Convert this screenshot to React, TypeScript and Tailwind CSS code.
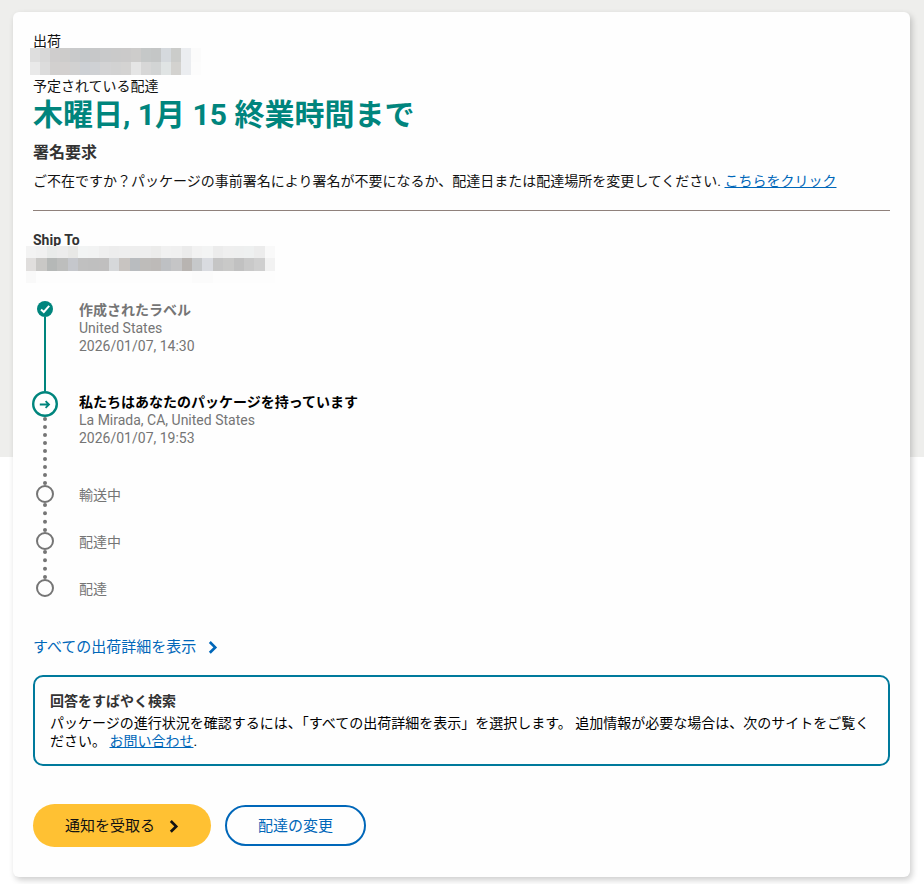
import React from 'react';

const TRACKING_MASK = [
  ['#dedede', '#d8d8d8', '#cfcdcd', '#cdcccb', '#c9cacb', '#c5c8ca', '#c7c8c9', '#c9cacb', '#cacaca', '#cbcaca', '#cdcccb', '#c5c8c8', '#c4c6c6', '#d5d9dd', '#cbccca', '#ebedf0', '#fbfbfb'],
  ['#e9e9e9', '#dcdcdc', '#d2d0cf', '#d3d0cf', '#d1d1d1', '#cdd0d4', '#cfd1d4', '#d3d3d4', '#d2d2d2', '#d4d3d2', '#e5e5e5', '#d7d7d7', '#d2d4d4', '#e0e4e4', '#d3d2cf', '#ebedf0', '#fcfcfc'],
];

const ADDRESS_MASK = [
  ['#f3f3f3', '#f1f1f1', '#e9ebea', '#ececec', '#e8e8e6', '#f2f4f4', '#f2f3f3', '#efefef', '#ededed', '#eeeeee', '#eeeeee', '#eeeeee', '#ececeb', '#f1f1f1', '#f0f0f0', '#ebebeb', '#f2f2f2', '#f3f4f4', '#ececec', '#efefef', '#eeefef', '#eef0f0', '#ececec', '#f9f9f9'],
  ['#e0dedd', '#c9c8c6', '#b5b8b7', '#bdbebd', '#c5c7cc', '#c0c0c0', '#bfbfbf', '#c0bfbf', '#d6d8da', '#c8c4c1', '#b9bcbf', '#bebcba', '#bdbab8', '#bec0c3', '#c5c5c6', '#b8b4b1', '#c6c8ca', '#d9dbe0', '#c5c5c5', '#c9c9c8', '#c1c1c1', '#c9c9c9', '#cfcfcf', '#f2f2f2'],
  ['#f9f9f9', '#fdfdfd', '#fdfdfd', '#fdfdfd', '#fdfdfd', '#fdfdfd', '#fdfdfd', '#fdfdfd', '#fdfdfd', '#fdfdfd', '#fdfdfd', '#fdfdfd', '#fdfdfd', '#fdfdfd', '#fdfdfd', '#fdfdfd', '#fbfbfb', '#fbfbfb', '#fdfdfd', '#fdfdfd', '#fdfdfd', '#fdfdfd', '#fdfdfd', '#fdfdfd'],
];

type Status = 'done' | 'current' | 'pending';

const STEPS: { title: string; status: Status; details: string[] }[] = [
  { title: '作成されたラベル', status: 'done', details: ['United States', '2026/01/07, 14:30'] },
  { title: '私たちはあなたのパッケージを持っています', status: 'current', details: ['La Mirada, CA, United States', '2026/01/07, 19:53'] },
  { title: '輸送中', status: 'pending', details: [] },
  { title: '配達中', status: 'pending', details: [] },
  { title: '配達', status: 'pending', details: [] },
];

// Private data is shown as a mosaic
function Mosaic({ rows }: { rows: string[][] }) {
  return (
    <div className="flex h-full flex-col" aria-hidden="true">
      {rows.map((row, i) => (
        <div key={i} className="flex flex-1">
          {row.map((color, j) => (
            <span key={j} className="flex-1" style={{ backgroundColor: color }} />
          ))}
        </div>
      ))}
    </div>
  );
}

function Marker({ status }: { status: Status }) {
  if (status === 'done') {
    return (
      <svg className="size-4 shrink-0" viewBox="0 0 16 16" fill="none">
        <circle cx="8" cy="8" r="8" fill="#00857d" />
        <path d="M4 8.4 6.8 11 12.2 4.8" stroke="#fff" strokeWidth="2" />
      </svg>
    );
  }
  if (status === 'current') {
    return (
      <svg className="size-[26px] shrink-0" viewBox="0 0 26 26" fill="none">
        <circle cx="13" cy="13" r="11.8" fill="#fff" stroke="#00857d" strokeWidth="2.4" />
        <path d="M7.8 13.5H17M13.6 10.1 17 13.5 13.6 16.9" stroke="#00857d" strokeWidth="1.8" />
      </svg>
    );
  }
  return <span className="size-[18px] shrink-0 rounded-full border-2 border-[#757575]" />;
}

function Chevron() {
  return (
    <svg className="h-3.5 w-2.5" viewBox="0 0 10 14" fill="none">
      <path d="M1.8 2 7.2 7.4 1.8 12.8" stroke="currentColor" strokeWidth="2.7" />
    </svg>
  );
}

export default function App() {
  return (
    <div className="min-h-screen bg-[linear-gradient(#eeeeec_457px,#fff_457px)] px-[13px] pt-3 pb-[7px] font-['Roboto','Noto_Sans_CJK_JP',sans-serif] text-sm leading-[18px] text-[#121212]" lang="ja">
      <main className="mr-px rounded-md bg-[#fefefe] px-5 pt-5 pb-[30px] shadow-[2px_3px_6px_rgba(0,0,0,0.2)]">
        {/* Shipment summary */}
        <section>
          <p>出荷</p>
          <div className="-mt-0.5 -ml-[3px] h-[27px] w-[171px]">
            <Mosaic rows={TRACKING_MASK} />
          </div>
          <p className="mt-0.5">予定されている配達</p>
          <h1 className="text-[30px] leading-10 font-bold text-[#00857d]">木曜日, 1月 15 終業時間まで</h1>
          <h2 className="mt-2 text-base leading-5 font-bold text-[#333]">署名要求</h2>
          <p className="mt-[9px]">
            ご不在ですか？パッケージの事前署名により署名が不要になるか、配達日または配達場所を変更してください.{' '}
            <a href="#change" className="text-[#0067b9] underline">こちらをクリック</a>
          </p>
        </section>

        <hr className="mt-5 border-[#8f817b]" />

        {/* Recipient */}
        <section className="mt-5">
          <h3 className="font-bold text-[#333]">Ship To</h3>
          <div className="relative -mt-[3px] -ml-[7px] h-[37px] w-[249px]">
            <Mosaic rows={ADDRESS_MASK} />
          </div>
        </section>

        {/* Progress */}
        <ol className="mt-[18px]">
          {STEPS.map((step, i) => {
            const last = i === STEPS.length - 1;
            return (
              <li
                key={step.title}
                className={`flex gap-5 ${
                  last ? '' : step.status === 'done' ? 'min-h-[90px]' : step.status === 'current' ? 'min-h-[94px]' : 'min-h-[47px]'
                }`}
              >
                <div className="-ml-px flex w-[26px] flex-col items-center">
                  <Marker status={step.status} />
                  {!last && (
                    step.status === 'done'
                      ? <span className="flex-1 border-l-2 border-[#00857d]" />
                      : <span className="flex-1 border-l-4 border-dotted border-[#757575]" />
                  )}
                </div>
                <div className={`ml-px text-[#757575] ${step.status === 'current' ? 'pt-0.5' : step.status === 'pending' ? 'pt-px' : ''}`}>
                  <p className={step.status === 'done' ? 'font-bold' : step.status === 'current' ? 'font-bold text-black' : ''}>
                    {step.title}
                  </p>
                  {step.details.map(d => <p key={d}>{d}</p>)}
                </div>
              </li>
            );
          })}
        </ol>

        <a href="#details" className="mt-[39px] inline-flex items-center gap-3 text-[15px] leading-5 text-[#0067b9]">
          すべての出荷詳細を表示
          <Chevron />
        </a>

        {/* Help box */}
        <section className="mt-[18px] rounded-[10px] border-2 border-[#007a9c] px-[15px] pt-[15px] pb-3.5">
          <h3 className="font-bold text-[#333]">回答をすばやく検索</h3>
          <p className="mt-1 text-black">
            パッケージの進行状況を確認するには、「すべての出荷詳細を表示」を選択します。 追加情報が必要な場合は、次のサイトをご覧ください。{' '}
            <a href="#contact" className="text-[#0067b9] underline">お問い合わせ</a>.
          </p>
        </section>

        {/* Actions */}
        <div className="mt-[38px] flex items-center gap-3.5 text-[15px]">
          <button className="flex h-[43px] items-center gap-3.5 rounded-full bg-[#ffc133] px-8 text-[#121212]">
            通知を受取る
            <Chevron />
          </button>
          <button className="h-[41px] rounded-full border-2 border-[#0067b9] px-[31px] text-[#0067b9]">
            配達の変更
          </button>
        </div>
      </main>
    </div>
  );
}
